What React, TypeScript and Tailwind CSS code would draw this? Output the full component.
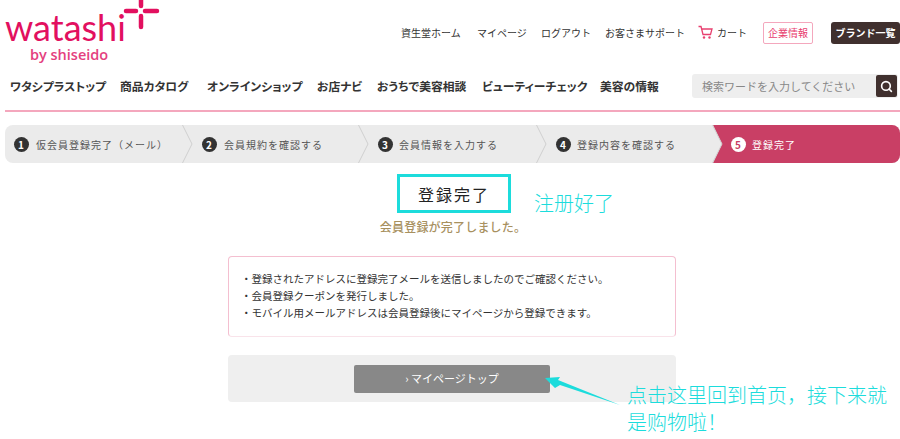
import { Search } from 'lucide-react';

const jp = { fontFamily: '"Noto Sans CJK JP", sans-serif' };
const cn = { fontFamily: '"Noto Sans CJK SC", sans-serif' };

const topLinks = [
  { label: '資生堂ホーム', className: 'w-[59px]' },
  { label: 'マイページ', className: 'w-[47px]' },
  { label: 'ログアウト', className: 'w-[47px]' },
  { label: 'お客さまサポート', className: 'w-[77px]' },
];

const mainLinks = [
  { label: 'ワタシプラストップ', className: 'w-[110px]' },
  { label: '商品カタログ', className: 'w-[87px]' },
  { label: 'オンラインショップ', className: 'w-[110px]' },
  { label: 'お店ナビ', className: 'w-[60px]' },
  { label: 'おうちで美容相談', className: 'w-[105px]' },
  { label: 'ビューティーチェック', className: 'w-[118px]' },
  { label: '美容の情報', className: 'w-[59px]' },
];

const steps = [
  { no: 1, label: '仮会員登録完了（メール）', className: 'w-[178px] gap-[7px] pl-[9px] rounded-l-lg' },
  { no: 2, label: '会員規約を確認する', className: 'w-[176px] gap-[7px] pl-[19px]' },
  { no: 3, label: '会員情報を入力する', className: 'w-[178px] gap-[6px] pl-[19px]' },
  { no: 4, label: '登録内容を確認する', className: 'w-[176px] gap-[6px] pl-[19px]' },
];

function Logo() {
  return (
    <div className="relative h-[64px] w-[160px] shrink-0 text-[#e2105f]">
      <div className="absolute left-0 top-[12px] text-[36px] leading-[30px]" style={{ fontFamily: 'Lato, sans-serif' }}>
        watashi
      </div>
      <div className="absolute left-[25px] top-[48px] text-[14.5px] font-semibold leading-[14px] text-[#e4407e]" style={{ fontFamily: '"Open Sans", sans-serif' }}>
        by shiseido
      </div>
      <svg className="absolute left-[113px] top-0" width="44" height="30" viewBox="0 0 44 30">
        <path d="M8 11H18M27 11H39M23 0V6M23 16V27" stroke="#e2105f" strokeWidth="4.5" strokeLinecap="round" fill="none" />
      </svg>
    </div>
  );
}

function Header() {
  return (
    <header className="h-[112px] border-b-2 border-[#f4a7bd]" style={jp}>
      <div className="flex h-[64px] items-start">
        <Logo />
        <div className="ml-auto flex h-[44px] items-center pt-[21px] text-[10px] text-[#333]">
          <div className="flex gap-[17px]">
            {topLinks.map((link) => (
              <a key={link.label} className={`${link.className} whitespace-nowrap`}>
                {link.label}
              </a>
            ))}
          </div>
          <svg className="ml-[16px]" width="15" height="15" viewBox="0 0 15 15" fill="none">
            <path d="M0.5 1.5H3L5 9.5H12.5L14 4H4" stroke="#e8406f" strokeWidth="1.3" />
            <circle cx="6" cy="12.5" r="1.2" fill="#e8406f" />
            <circle cx="11.5" cy="12.5" r="1.2" fill="#e8406f" />
          </svg>
          <a className="ml-[4px] w-[28px] whitespace-nowrap">カート</a>
          <a className="ml-[18px] flex h-[22px] w-[50px] items-center justify-center rounded-[2px] border border-[#f4a7bd] text-[#e8406f]">
            企業情報
          </a>
          <a className="ml-[18px] flex h-[22px] w-[69px] items-center justify-center rounded-[3px] bg-[#40302e] font-bold text-white">
            ブランド一覧
          </a>
        </div>
      </div>
      <div className="flex h-[46px] items-center pb-[2px] pl-[5px]">
        <nav className="flex text-[11.8px] font-bold text-[#333] [font-feature-settings:'palt']">
          {mainLinks.map((link) => (
            <a key={link.label} className={`${link.className} whitespace-nowrap`}>
              {link.label}
            </a>
          ))}
        </nav>
        <div className="ml-[33px] flex h-[24px] w-[206px] items-center justify-between rounded-[3px] bg-[#eeeeee] pl-[10px] pr-[1px] text-[11px] text-[#888]">
          <span>検索ワードを入力してください</span>
          <span className="flex h-[22px] w-[21px] items-center justify-center rounded-[2px] bg-[#40302e]">
            <Search className="h-[13px] w-[13px] text-white" strokeWidth={3} />
          </span>
        </div>
      </div>
    </header>
  );
}

function StepNo({ no, active }: { no: number; active?: boolean }) {
  return (
    <span
      className={`flex h-[15px] w-[15px] shrink-0 items-center justify-center rounded-full text-[10px] font-bold ${
        active ? 'bg-white text-[#c93f65]' : 'bg-[#333] text-white'
      }`}
    >
      {no}
    </span>
  );
}

function Steps() {
  return (
    <div className="mt-[13px] flex h-[38px] overflow-hidden rounded-lg bg-[#ebebeb] text-[10px] tracking-[1px] text-[#555]" style={jp}>
      {steps.map((step) => (
        <div key={step.no} className={`relative flex items-center whitespace-nowrap ${step.className}`}>
          <StepNo no={step.no} />
          <span>{step.label}</span>
          <svg className="absolute right-[-10px] top-0 z-10" width="11" height="38" viewBox="0 0 11 38" fill="none">
            <path d="M0.5 0L10 19L0.5 38" stroke="#cfcfcf" />
          </svg>
        </div>
      ))}
      <div className="flex flex-1 items-center gap-[6px] bg-[#c93f65] pl-[18px] text-white [clip-path:polygon(0_0,100%_0,100%_100%,0_100%,9px_50%)]">
        <StepNo no={5} active />
        <span>登録完了</span>
      </div>
    </div>
  );
}

export default function App() {
  return (
    <div className="relative h-[439px] w-[900px] overflow-hidden bg-white pl-[5px]">
      <Header />
      <Steps />

      <main className="flex flex-col items-center pr-[1px]" style={jp}>
        <h1 className="ml-[4px] mt-[11px] flex h-[39px] w-[114px] items-center justify-center border-[3px] border-[#1cdcdc] text-[16px] font-normal tracking-[2px] text-[#222]">
          登録完了
        </h1>
        <p className="ml-[2px] mt-[6px] text-[12px] font-medium leading-[16px] tracking-[0.2px] text-[#a8915f]">会員登録が完了しました。</p>

        <div className="mt-[21px] h-[81px] w-[448px] rounded-[4px] border border-[#f4bfd0] border-b-[#f9e3ea] px-[12px] pt-[13px] text-[10.5px] leading-[17px] text-[#333]">
          <p>・登録されたアドレスに登録完了メールを送信しましたのでご確認ください。</p>
          <p>・会員登録クーポンを発行しました。</p>
          <p>・モバイル用メールアドレスは会員登録後にマイページから登録できます。</p>
        </div>

        <div className="mt-[18px] flex h-[47px] w-[448px] items-center justify-center rounded-[4px] bg-[#efefef]">
          <a className="flex h-[28px] w-[196px] items-center justify-center rounded-[2px] bg-[#888888] text-[11px] text-white">
            › マイページトップ
          </a>
        </div>
      </main>

      <div className="absolute left-[534px] top-[188px] text-[20px] font-light leading-[29px] text-[#1cdcdc]" style={cn}>
        注册好了
      </div>
      <div className="absolute left-[627px] top-[381px] w-[270px] text-[20px] font-light leading-[27px] text-[#1cdcdc]" style={cn}>
        点击这里回到首页，接下来就是购物啦！
      </div>
      <svg className="absolute left-[540px] top-[370px]" width="90" height="42" viewBox="0 0 90 42">
        <path d="M5 8L20 7L18 10L80 35L20 15L15 18Z" fill="#1cdcdc" />
      </svg>
    </div>
  );
}
